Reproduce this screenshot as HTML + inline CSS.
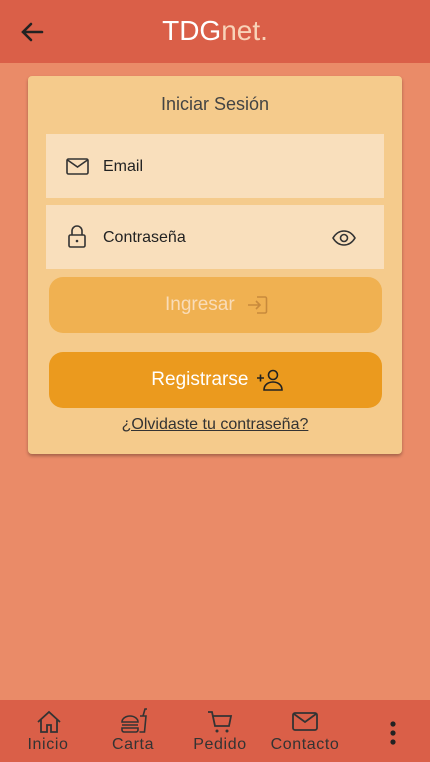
<!DOCTYPE html><html><head><meta charset="utf-8"><style>
*{margin:0;padding:0;box-sizing:border-box}
body{width:430px;height:762px;background:#EA8B68;font-family:"Liberation Sans",sans-serif;position:relative;overflow:hidden}
.hd{position:absolute;left:0;top:0;width:430px;height:63px;background:#DA5F48}
.hd .t{position:absolute;left:0;width:430px;top:15px;text-align:center;font-size:28px;color:#fff}
.hd .t span{color:#F8D3B8}
.card{position:absolute;left:28px;top:76px;width:374px;height:378px;background:#F5CB8C;border-radius:4px;box-shadow:0 2px 3px rgba(0,0,0,.3)}
.ttl{position:absolute;top:94px;width:100%;text-align:center;font-size:18px;color:#444;left:0}
.in{position:absolute;left:46px;width:338px;height:64px;background:#F9DFBC}
.in .l{position:absolute;left:57px;top:24px;font-size:16px;color:#222}
.btn{position:absolute;left:49px;width:333px;height:56px;border-radius:14px;text-align:center;font-size:19px;line-height:56px}
.nav{position:absolute;left:0;top:700px;width:430px;height:62px;background:#DA5F48}
.ni{position:absolute;top:36px;font-size:16px;color:#333;text-align:center;letter-spacing:.6px}
svg{position:absolute}
</style></head><body>
<div class="hd"><svg style="left:20px;top:21px" width="24" height="22" viewBox="0 0 24 22"><path d="M22 11H3M11 3L3 11l8 8" stroke="#222" stroke-width="2.6" fill="none" stroke-linecap="round"/></svg>
<div class="t">TDG<span>net.</span></div></div>
<div class="card"></div>
<div class="ttl">Iniciar Sesión</div>
<div class="in" style="top:134px"><svg style="left:20px;top:24px" width="24" height="18" viewBox="0 0 24 18"><rect x="1" y="1" width="21" height="15" rx="1.5" fill="none" stroke="#333" stroke-width="1.6"/><path d="M1.5 2l10 7 10-7" fill="none" stroke="#333" stroke-width="1.6"/></svg><div class="l">Email</div></div>
<div class="in" style="top:205px"><svg style="left:21px;top:20px" width="20" height="24" viewBox="0 0 20 24"><rect x="2" y="10" width="16" height="12" rx="1.5" fill="none" stroke="#333" stroke-width="1.6"/><path d="M5 10V6a5 5 0 0110 0v4" fill="none" stroke="#333" stroke-width="1.6"/><circle cx="10" cy="16" r="1.3" fill="#333"/></svg><div class="l">Contraseña</div>
<svg style="left:285px;top:24px" width="26" height="18" viewBox="0 0 26 18"><path d="M2 9c3-5 7-7 11-7s8 2 11 7c-3 5-7 7-11 7S5 14 2 9z" fill="none" stroke="#333" stroke-width="1.6"/><circle cx="13" cy="9" r="3.5" fill="none" stroke="#333" stroke-width="1.6"/></svg></div>
<div class="btn" style="top:277px;background:#F0B151;color:#F9DCB8">Ingresar <span style="display:inline-block;width:26px"></span></div>
<svg style="left:247px;top:295px" width="22" height="20" viewBox="0 0 22 20"><path d="M10 2h8a1.5 1.5 0 011.5 1.5v13A1.5 1.5 0 0118 18h-8M1 10h12M9 6l4 4-4 4" fill="none" stroke="#C88A3C" stroke-width="1.6"/></svg>
<div class="btn" style="top:352px;background:#EB9A1E;color:#fff">Registrarse <span style="display:inline-block;width:26px"></span></div>
<svg style="left:256px;top:368px" width="28" height="24" viewBox="0 0 28 24"><circle cx="17" cy="7" r="4.5" fill="none" stroke="#222" stroke-width="1.6"/><path d="M8 22c0-5 4-8 9-8s9 3 9 8z" fill="none" stroke="#222" stroke-width="1.6"/><path d="M1 10h7M4.5 6.5v7" stroke="#222" stroke-width="1.6"/></svg>
<div style="position:absolute;left:0;width:430px;top:416px;text-align:center;font-size:16px;color:#333;text-decoration:underline">¿Olvidaste tu contraseña?</div>
<div class="nav">
<svg style="left:36px;top:10px" width="26" height="24" viewBox="0 0 26 24"><path d="M2 12L13 2l11 10M5 9v13h6v-7h4v7h6V9" fill="none" stroke="#333" stroke-width="1.8"/></svg>
<svg style="left:120px;top:6px" width="28" height="28" viewBox="0 0 28 28"><path d="M20 10h6l-1.5 16h-5M23 10l2-7h2" fill="none" stroke="#333" stroke-width="1.6"/><path d="M2 16a8 6 0 0116 0zM2 19h16M2 22h16v2a2 2 0 01-2 2H4a2 2 0 01-2-2z" fill="none" stroke="#333" stroke-width="1.6"/></svg>
<svg style="left:207px;top:10px" width="26" height="24" viewBox="0 0 26 24"><path d="M1 2h4l3 14h14l2-10H6" fill="none" stroke="#333" stroke-width="1.8"/><circle cx="10" cy="21" r="1.5" fill="#333"/><circle cx="20" cy="21" r="1.5" fill="#333"/></svg>
<svg style="left:292px;top:12px" width="26" height="20" viewBox="0 0 26 20"><rect x="1" y="1" width="24" height="17" rx="2" fill="none" stroke="#333" stroke-width="1.8"/><path d="M2 2l11 8 11-8" fill="none" stroke="#333" stroke-width="1.8"/></svg>
<svg style="left:389px;top:20px" width="8" height="26" viewBox="0 0 8 26"><circle cx="4" cy="4" r="2.6" fill="#222"/><circle cx="4" cy="13" r="2.6" fill="#222"/><circle cx="4" cy="22" r="2.6" fill="#222"/></svg>
<div class="ni" style="left:20px;width:56px">Inicio</div>
<div class="ni" style="left:104px;width:58px">Carta</div>
<div class="ni" style="left:186px;width:68px">Pedido</div>
<div class="ni" style="left:265px;width:80px">Contacto</div>
</div>
</body></html>
